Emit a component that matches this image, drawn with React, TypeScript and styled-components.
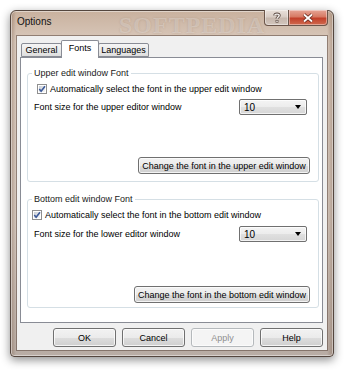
import React from "react";
import styled, { createGlobalStyle } from "styled-components";

const GlobalStyle = createGlobalStyle`
  html, body {
    margin: 0;
    padding: 0;
    background: #ffffff;
  }
  body {
    font-family: "Liberation Sans", Arial, sans-serif;
    font-size: 9px;
    color: #000;
  }
`;

const Page = styled.div`
  width: 350px;
  height: 375px;
  padding: 10px 0 0 10px;
  box-sizing: border-box;
  overflow: hidden;
`;

const Window = styled.div`
  position: relative;
  width: 324px;
  height: 347px;
  box-sizing: border-box;
  display: flex;
  flex-direction: column;
  border: 1px solid #54463e;
  border-radius: 6px 6px 4px 4px;
  background:
    linear-gradient(90deg, rgba(120, 90, 70, 0.4) 0px, rgba(255, 255, 255, 0) 5px,
      rgba(255, 255, 255, 0) 316px, rgba(120, 90, 70, 0.4) 322px),
    linear-gradient(180deg, #c9b19e 0%, #d9c9bc 9%, #d4c7bd 60%, #b8aca4 100%);
  box-shadow: 0 3px 10px rgba(0, 0, 0, 0.45), inset 0 0 0 1px rgba(255, 255, 255, 0.45);
`;

const TitleBar = styled.div`
  position: relative;
  height: 25px;
  flex: none;
  display: flex;
  align-items: flex-start;
  padding: 0 5px 0 6px;
`;

const Title = styled.div`
  margin-top: 5px;
  font-size: 10px;
  line-height: 12px;
  color: #111;
`;

const TitleMark = styled.div`
  position: absolute;
  left: 108px;
  top: 1px;
  font-family: "Liberation Serif", "Times New Roman", serif;
  font-weight: bold;
  font-size: 24px;
  letter-spacing: 1px;
  color: rgba(255, 255, 255, 0.28);
  text-shadow: 0 0 2px rgba(120, 90, 70, 0.25);
  pointer-events: none;
`;

const CaptionButtons = styled.div`
  margin-left: auto;
  display: flex;
  margin-top: -1px;
`;

const CaptionButton = styled.div<{ $close?: boolean }>`
  width: ${(p) => (p.$close ? 40 : 25)}px;
  height: 16px;
  box-sizing: border-box;
  display: flex;
  align-items: center;
  justify-content: center;
  border: 1px solid #6b554a;
  border-top: none;
  border-radius: ${(p) => (p.$close ? "0 0 4px 0" : "0 0 0 4px")};
  margin-left: ${(p) => (p.$close ? -1 : 0)}px;
  background: ${(p) =>
    p.$close
      ? "linear-gradient(180deg, #e6a596 0%, #d77a64 45%, #c2402a 55%, #d06b4f 100%)"
      : "linear-gradient(180deg, #e9e0da 0%, #d9cdc5 45%, #c6b7ad 55%, #d3c6bd 100%)"};
  box-shadow: inset 0 0 0 1px rgba(255, 255, 255, 0.4);
`;

const Client = styled.div`
  flex: 1;
  margin: 0 6px 6px 6px;
  display: flex;
  flex-direction: column;
  padding: 4px 4px 3px 3px;
  background: #f0f0f0;
  box-shadow: 0 0 0 1px rgba(90, 70, 60, 0.55);
`;

const TabStrip = styled.div`
  height: 17px;
  display: flex;
  align-items: flex-end;
  padding-left: 1px;
  position: relative;
  z-index: 1;
`;

const Tab = styled.div<{ $active?: boolean; $w: number }>`
  width: ${(p) => p.$w}px;
  height: ${(p) => (p.$active ? 18 : 14)}px;
  margin-left: -1px;
  margin-bottom: ${(p) => (p.$active ? -1 : 0)}px;
  box-sizing: border-box;
  display: flex;
  align-items: center;
  justify-content: center;
  padding-bottom: ${(p) => (p.$active ? 3 : 0)}px;
  border: 1px solid #898c95;
  border-bottom: ${(p) => (p.$active ? "none" : "1px solid #898c95")};
  border-radius: 2px 2px 0 0;
  background: ${(p) =>
    p.$active ? "#ffffff" : "linear-gradient(180deg, #f5f5f5 0%, #ebebeb 50%, #dedede 100%)"};
  position: relative;
  z-index: ${(p) => (p.$active ? 2 : 1)};
  &:first-child {
    margin-left: 0;
  }
`;

const Panel = styled.div`
  position: relative;
  height: 266px;
  box-sizing: border-box;
  display: flex;
  flex-direction: column;
  padding: 0 3px 0 6px;
  background: #ffffff;
  border: 1px solid #898c95;
`;

const Group = styled.fieldset<{ $top: number; $bottom: number }>`
  margin: ${(p) => p.$top}px 0 0 0;
  padding: 0 8px ${(p) => p.$bottom}px 6px;
  min-width: 0;
  border: 1px solid #d5dfe5;
  border-radius: 3px;
`;

const Legend = styled.legend`
  padding: 0 2px;
  margin-left: -2px;
  font-size: 9px;
  line-height: 11px;
  color: #1a1a1a;
`;

const GroupBody = styled.div`
  display: flex;
  flex-direction: column;
`;

const CheckRow = styled.label<{ $indent: number; $top: number }>`
  display: flex;
  align-items: center;
  gap: 3px;
  height: 12px;
  margin-top: ${(p) => p.$top}px;
  margin-left: ${(p) => p.$indent}px;
  white-space: nowrap;
`;

const SizeRow = styled.div<{ $top: number }>`
  display: flex;
  align-items: center;
  justify-content: space-between;
  height: 16px;
  margin-top: ${(p) => p.$top}px;
`;

const Combo = styled.div`
  width: 68px;
  height: 16px;
  margin-right: 3px;
  box-sizing: border-box;
  display: flex;
  align-items: center;
  padding: 0 5px 0 4px;
  border: 1px solid #707070;
  border-radius: 2px;
  background: linear-gradient(180deg, #f4f4f4 0%, #ececec 50%, #e0e0e0 51%, #d6d6d6 100%);
  box-shadow: inset 0 0 0 1px rgba(255, 255, 255, 0.7);
  font-size: 10px;
`;

const ComboArrow = styled.span`
  margin-left: auto;
  width: 0;
  height: 0;
  border-left: 3.5px solid transparent;
  border-right: 3.5px solid transparent;
  border-top: 4px solid #000;
`;

const Button = styled.div<{ $w: number; $top?: number; $disabled?: boolean }>`
  width: ${(p) => p.$w}px;
  height: ${(p) => (p.$top !== undefined ? 17 : 19)}px;
  margin-top: ${(p) => p.$top ?? 0}px;
  align-self: flex-end;
  box-sizing: border-box;
  display: flex;
  align-items: center;
  justify-content: center;
  white-space: nowrap;
  border: 1px solid ${(p) => (p.$disabled ? "#b5b9bc" : "#707070")};
  border-radius: 3px;
  color: ${(p) => (p.$disabled ? "#8f8f8f" : "#000")};
  background: ${(p) =>
    p.$disabled
      ? "#f4f4f4"
      : "linear-gradient(180deg, #f2f2f2 0%, #ebebeb 50%, #dddddd 51%, #cfcfcf 100%)"};
  box-shadow: inset 0 0 0 1px rgba(252, 252, 252, 0.8);
`;

const ButtonRow = styled.div`
  display: flex;
  justify-content: flex-end;
  gap: 6px;
  margin-top: 5px;
`;

const CheckBox: React.FC = () => (
  <svg width="10" height="10" viewBox="0 0 10 10">
    <defs>
      <linearGradient id="cbg" x1="0" y1="0" x2="1" y2="1">
        <stop offset="0" stopColor="#cbcfd5" />
        <stop offset="1" stopColor="#f6f6f6" />
      </linearGradient>
    </defs>
    <rect x="0.5" y="0.5" width="9" height="9" fill="#fff" stroke="#8f8f8f" />
    <rect x="2" y="2" width="6" height="6" fill="url(#cbg)" />
    <path d="M2.3 5.1 L4.1 7.2 L8 2.2" fill="none" stroke="#3c5a9a" strokeWidth="1.6" />
  </svg>
);

const HelpGlyph: React.FC = () => (
  <svg width="10" height="11" viewBox="0 0 10 11">
    <path
      d="M2.8 3.6 C2.8 1.6 7.2 1.6 7.2 3.6 C7.2 5 5 5 5 6.8"
      fill="none"
      stroke="#5b4a42"
      strokeWidth="3"
    />
    <path
      d="M2.8 3.6 C2.8 1.6 7.2 1.6 7.2 3.6 C7.2 5 5 5 5 6.8"
      fill="none"
      stroke="#f4f0ee"
      strokeWidth="1.4"
    />
    <rect x="3.6" y="8" width="2.8" height="2.6" fill="#5b4a42" />
    <rect x="4.3" y="8.6" width="1.4" height="1.4" fill="#f4f0ee" />
  </svg>
);

const CloseGlyph: React.FC = () => (
  <svg width="12" height="10" viewBox="0 0 12 10">
    <path d="M2 1.5 L10 8.5 M10 1.5 L2 8.5" stroke="#6a2a1e" strokeWidth="3.6" />
    <path d="M2 1.5 L10 8.5 M10 1.5 L2 8.5" stroke="#ffffff" strokeWidth="1.8" />
  </svg>
);

type FontGroupProps = {
  title: string;
  which: string;
  editor: string;
  indent: number;
  top: number;
  bottom: number;
  checkTop: number;
  sizeTop: number;
  buttonTop: number;
  buttonWidth: number;
};

const FontGroup: React.FC<FontGroupProps> = (p) => (
  <Group $top={p.top} $bottom={p.bottom}>
    <Legend>{p.title}</Legend>
    <GroupBody>
      <CheckRow $indent={p.indent} $top={p.checkTop}>
        <CheckBox />
        <span>Automatically select the font in the {p.which} edit window</span>
      </CheckRow>
      <SizeRow $top={p.sizeTop}>
        <span>Font size for the {p.editor} editor window</span>
        <Combo>
          10
          <ComboArrow />
        </Combo>
      </SizeRow>
      <Button $w={p.buttonWidth} $top={p.buttonTop}>
        Change the font in the {p.which} edit window
      </Button>
    </GroupBody>
  </Group>
);

export default function App() {
  return (
    <Page>
      <GlobalStyle />
      <Window>
        <TitleBar>
          <Title>Options</Title>
          <TitleMark>SOFTPEDIA</TitleMark>
          <CaptionButtons>
            <CaptionButton>
              <HelpGlyph />
            </CaptionButton>
            <CaptionButton $close>
              <CloseGlyph />
            </CaptionButton>
          </CaptionButtons>
        </TitleBar>
        <Client>
          <TabStrip>
            <Tab $w={41}>General</Tab>
            <Tab $w={38} $active>
              Fonts
            </Tab>
            <Tab $w={51}>Languages</Tab>
          </TabStrip>
          <Panel>
            <FontGroup
              title="Upper edit window Font"
              which="upper"
              editor="upper"
              indent={3}
              top={10}
              bottom={7}
              checkTop={4}
              sizeTop={4}
              buttonTop={42}
              buttonWidth={172}
            />
            <FontGroup
              title="Bottom edit window Font"
              which="bottom"
              editor="lower"
              indent={-2}
              top={12}
              bottom={4}
              checkTop={4}
              sizeTop={5}
              buttonTop={44}
              buttonWidth={176}
            />
          </Panel>
          <ButtonRow>
            <Button $w={63}>OK</Button>
            <Button $w={63}>Cancel</Button>
            <Button $w={63} $disabled>
              Apply
            </Button>
            <Button $w={63}>Help</Button>
          </ButtonRow>
        </Client>
      </Window>
    </Page>
  );
}
